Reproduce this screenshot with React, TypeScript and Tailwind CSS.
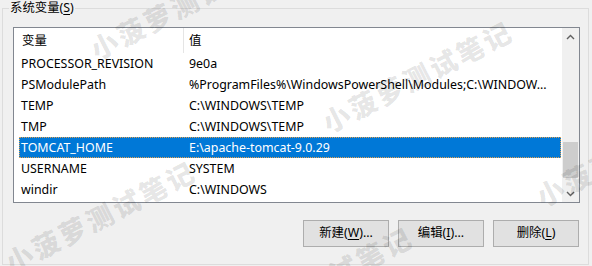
const rows = [
  { name: "PROCESSOR_REVISION", value: "9e0a" },
  {
    name: "PSModulePath",
    value: "%ProgramFiles%\\WindowsPowerShell\\Modules;C:\\WINDOW...",
  },
  { name: "TEMP", value: "C:\\WINDOWS\\TEMP" },
  { name: "TMP", value: "C:\\WINDOWS\\TEMP" },
  { name: "TOMCAT_HOME", value: "E:\\apache-tomcat-9.0.29", selected: true },
  { name: "USERNAME", value: "SYSTEM" },
  { name: "windir", value: "C:\\WINDOWS" },
];

// watermark positions (left-centre of the first glyph)
const marks = [
  "left-[92px] top-[37px]",
  "left-[324px] top-[110px]",
  "left-[7px] top-[250px]",
  "left-[538px] top-[184px]",
  "left-[224px] top-[316px]",
];

function Chevron({ down }: { down?: boolean }) {
  return (
    <svg width="9" height="6" viewBox="0 0 9 6">
      <polyline
        points={down ? "1,1 4.5,4.5 8,1" : "1,5 4.5,1.5 8,5"}
        fill="none"
        stroke="#606060"
        strokeWidth="1.4"
      />
    </svg>
  );
}

function Btn({ label, k, tail }: { label: string; k: string; tail?: string }) {
  return (
    <div className="flex h-[27px] w-[86px] items-center justify-center border border-[#adadad] bg-[#e1e1e1]">
      {label}(<span className="underline underline-offset-2">{k}</span>){tail}
    </div>
  );
}

export default function App() {
  return (
    <div className="relative h-[266px] w-[592px] overflow-hidden bg-[#f0f0f0] font-['Segoe_UI','Noto_Sans','Noto_Sans_CJK_SC',sans-serif] text-[12.4px] text-black">
      <div className="relative ml-[2px] mt-[8px] h-[257px] w-[587px] border border-[#dcdcdc] pl-[10px] pt-[18px]">
        <div className="absolute left-[6px] top-[-9px] bg-[#f0f0f0] px-[1px] leading-[16px]">
          系统变量(<span className="underline underline-offset-2">S</span>)
        </div>

        <div className="flex h-[176px] w-[567px] border border-[#828790] bg-white">
          <div className="w-[548px] overflow-hidden">
            <div className="flex h-[25px] leading-[25px]">
              <div className="w-[170px] border-r border-[#e5e5e5] pl-[8px]">变量</div>
              <div className="pl-[5px]">值</div>
            </div>
            <div className="ml-[5px] w-[542px]">
              {rows.map((r, i) => (
                <div
                  key={i}
                  className={
                    r.selected
                      ? "flex h-[21px] border border-dotted border-[#e0a050] bg-[#0078d7] leading-[19px] text-white"
                      : "flex h-[21px] border border-transparent leading-[19px]"
                  }
                >
                  <div className="w-[168px] pl-[1px] whitespace-nowrap">{r.name}</div>
                  <div className="pl-[1px] whitespace-nowrap">{r.value}</div>
                </div>
              ))}
            </div>
          </div>
          <div className="flex w-[17px] flex-col bg-[#f0f0f0]">
            <div className="flex h-[17px] items-center justify-center">
              <Chevron />
            </div>
            <div className="flex-1">
              <div className="mx-[1px] mt-[97px] h-[36px] bg-[#cdcdcd]" />
            </div>
            <div className="flex h-[17px] items-center justify-center">
              <Chevron down />
            </div>
          </div>
        </div>

        <div className="mt-[17px] flex w-[566px] justify-end gap-[9px]">
          <Btn label="新建" k="W" tail="..." />
          <Btn label="编辑" k="I" tail="..." />
          <Btn label="删除" k="L" />
        </div>
      </div>

      {marks.map((m, i) => (
        <div
          key={i}
          className={`pointer-events-none absolute ${m} origin-left -rotate-[27deg] whitespace-nowrap font-['Noto_Sans_CJK_SC',sans-serif] text-[27px] font-black leading-[28px] tracking-[3px] text-black/[0.11]`}
        >
          小菠萝测试笔记
        </div>
      ))}
    </div>
  );
}
